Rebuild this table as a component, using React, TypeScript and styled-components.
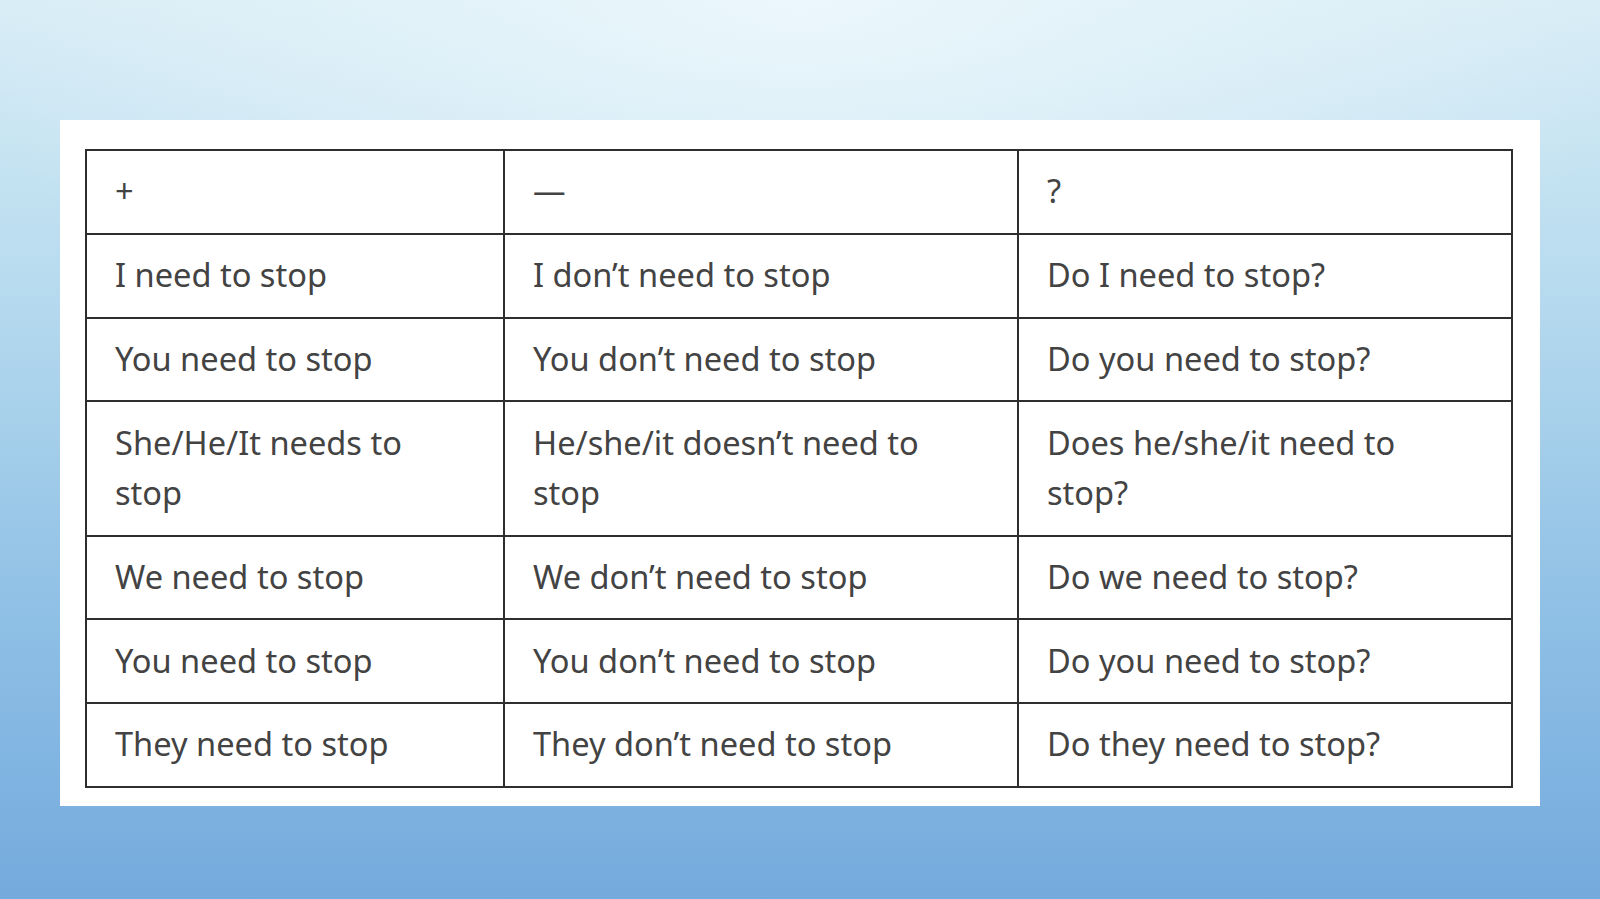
import React from "react";
import styled, { createGlobalStyle } from "styled-components";

const Global = createGlobalStyle`
  html, body { margin: 0; padding: 0; }
  body { font-family: "Noto Sans", "Open Sans", sans-serif; }
`;

const Page = styled.div`
  width: 1600px;
  height: 899px;
  box-sizing: border-box;
  padding: 120px 0 0 60px;
  background:
    radial-gradient(ellipse 900px 360px at 50% 0%, rgba(236, 247, 252, 0.95), rgba(236, 247, 252, 0) 100%),
    linear-gradient(180deg, #d6ecf5 0%, #b9dcef 30%, #92c2e6 65%, #74aadd 100%);
  overflow: hidden;
`;

const Card = styled.div`
  width: 1480px;
  height: 686px;
  box-sizing: border-box;
  background: #ffffff;
  padding: 29px 29px 0 25px;
`;

const Table = styled.table`
  width: 1426px;
  border-collapse: collapse;
  table-layout: fixed;
  border: 2px solid #2e2e2e;
`;

const Col = styled.col<{ $w: number }>`
  width: ${(p) => p.$w}px;
`;

const Row = styled.tr<{ $h: number }>`
  height: ${(p) => p.$h}px;
`;

const Cell = styled.td`
  border: 2px solid #2e2e2e;
  padding: 14px 28px 15px 28px;
  font-size: 32.6px;
  line-height: 50.5px;
  color: #434343;
  vertical-align: middle;
  text-align: left;
`;

const header = ["+", "—", "?"];
const rows: [string, string, string][] = [
  ["I need to stop", "I don’t need to stop", "Do I need to stop?"],
  ["You need to stop", "You don’t need to stop", "Do you need to stop?"],
  ["She/He/It needs to stop", "He/she/it doesn’t need to stop", "Does he/she/it need to stop?"],
  ["We need to stop", "We don’t need to stop", "Do we need to stop?"],
  ["You need to stop", "You don’t need to stop", "Do you need to stop?"],
  ["They need to stop", "They don’t need to stop", "Do they need to stop?"],
];

export default function App() {
  return (
    <>
      <Global />
      <Page>
        <Card>
          <Table>
            <colgroup>
              <Col $w={418} />
              <Col $w={514} />
              <Col $w={494} />
            </colgroup>
            <tbody>
              <Row $h={83.8}>
                {header.map((h, i) => (
                  <Cell key={i}>{h}</Cell>
                ))}
              </Row>
              {rows.map((r, i) => (
                <Row key={i} $h={i === 2 ? 134.3 : 83.8}>
                  {r.map((c, j) => (
                    <Cell key={j}>{c}</Cell>
                  ))}
                </Row>
              ))}
            </tbody>
          </Table>
        </Card>
      </Page>
    </>
  );
}
